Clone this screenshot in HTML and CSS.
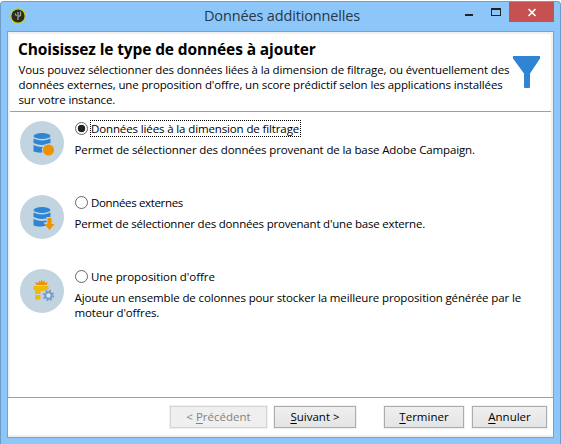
FILE: index.html
```html
<!DOCTYPE html>
<html lang="fr">
<head>
<meta charset="utf-8">
<title>Données additionnelles</title>
<link rel="stylesheet" href="styles.css">
</head>
<body>
<div class="window">
  <header class="titlebar">
    <svg class="app-icon" width="16" height="16" viewBox="0 0 16 16"><circle cx="8" cy="8" r="7.200" fill="#2b2d25" stroke="#c5d610" stroke-width="1.200"/><path d="M5 5.500l1.500 2.500M8 4v8M8 8.500l2.500-1V3.500" fill="none" stroke="#a9a998" stroke-width="1.200"/></svg>
    <h1 class="window-title">Données additionnelles</h1>
    <div class="controls">
      <svg class="ctl" width="26" height="20" viewBox="0 0 26 20"><path d="M5 12h8v2H5z" fill="#222"/></svg>
      <svg class="ctl" width="26" height="20" viewBox="0 0 26 20"><path d="M5 6h10v8H5zM6 8v5h8V8z" fill="#222" fill-rule="evenodd"/></svg>
      <svg class="ctl close" width="45" height="20" viewBox="0 0 45 20"><path d="M19.500 7l7 7M26.500 7l-7 7" stroke="#fff" stroke-width="1.700"/></svg>
    </div>
  </header>
  <main class="client">
    <div class="page">
      <section class="intro">
        <div class="intro-text">
          <h2>Choisissez le type de données à ajouter</h2>
          <p><span class="t1">Vous pouvez sélectionner des données liées à la dimension de filtrage, ou éventuellement des</span><br><span class="t1">données externes, une proposition d'offre, un score prédictif selon les applications installées</span><br><span class="t1">sur votre instance.</span></p>
        </div>
        <svg class="funnel" width="28" height="33" viewBox="0 0 28 33"><path d="M0 0h27v2.500L17 17.500V31q0 1-1 1h-4q-1 0-1-1V17.500L0 2.500z" fill="#3085d3"/></svg>
      </section>
      <section class="options">
        <div class="option">
          <svg class="badge" width="44" height="44" viewBox="0 0 44 44"><circle cx="22" cy="22" r="22" fill="#c3d4e1"/><g fill="#3085d3"><ellipse cx="22" cy="15" rx="8.500" ry="3"/><path d="M13.500 17.500q8.500 4 17 0v4.500q-8.500 4-17 0zM13.500 24q8.500 4 17 0v4.500q-8.500 5-17 2z"/></g><circle cx="28.500" cy="29" r="6.500" fill="#c3d4e1"/><circle cx="28.500" cy="29" r="5.500" fill="#ee9200"/></svg>
          <div class="body">
            <label class="choice"><span class="radio on"></span><span class="label focus t1">Données liées à la dimension de filtrage</span></label>
            <p class="t1">Permet de sélectionner des données provenant de la base Adobe Campaign.</p>
          </div>
        </div>
        <div class="option">
          <svg class="badge" width="44" height="44" viewBox="0 0 44 44"><circle cx="22" cy="22" r="22" fill="#c3d4e1"/><g fill="#3085d3"><ellipse cx="22" cy="15" rx="8.500" ry="3"/><path d="M13.500 17.500q8.500 4 17 0v4.500q-8.500 4-17 0zM13.500 24q8.500 4 17 0v4.500q-8.500 5-17 2z"/></g><path d="M26.500 22h6v5.500h3L29.500 36l-6-8.500h3z" fill="#c3d4e1"/><path d="M27.500 23h4v6h3l-5 6-5-6h3z" fill="#ee9200"/></svg>
          <div class="body">
            <label class="choice"><span class="radio"></span><span class="label t3">Données externes</span></label>
            <p class="t2">Permet de sélectionner des données provenant d'une base externe.</p>
          </div>
        </div>
        <div class="option">
          <svg class="badge" width="44" height="44" viewBox="0 0 44 44"><circle cx="22" cy="22" r="22" fill="#c3d4e1"/><path d="M16.500 16l-1.500-3 3.500 1 .5-2.500 1.500 1.500L21.500 10.500 23 13l1.500-1.500.5 2.500 3-1-1.500 3z" fill="#ee9200"/><path d="M13.500 17h15v4l-7 1h-6.500v-1h-1.500zM15 22h5.500v3H15zM15 26h5.500v4.500H15z" fill="#f0b90a"/><circle cx="28.500" cy="26.500" r="6" fill="#c3d4e1"/><circle cx="28.500" cy="26.500" r="3.200" fill="#d9e4ec" stroke="#7398cb" stroke-width="2"/><circle cx="28.500" cy="26.500" r="4.900" fill="none" stroke="#7398cb" stroke-width="1.600" stroke-dasharray="1.925 1.924"/></svg>
          <div class="body">
            <label class="choice"><span class="radio"></span><span class="label t4">Une proposition d'offre</span></label>
            <p class="t1">Ajoute un ensemble de colonnes pour stocker la meilleure proposition générée par le<br>moteur d'offres.</p>
          </div>
        </div>
      </section>
    </div>
    <footer class="actions">
      <button class="btn prev" disabled>&lt; <u>P</u>récédent</button>
      <button class="btn next"><u>S</u>uivant &gt;</button>
      <button class="btn finish"><u>T</u>erminer</button>
      <button class="btn cancel"><u>A</u>nnuler</button>
    </footer>
  </main>
</div>
</body>
</html>
```
FILE: styles.css
```css
* { box-sizing: border-box; }

body {
  margin: 0;
  background: #fff;
  color: #000;
  font: 11.5px/15px "Open Sans", "Noto Sans", sans-serif;
  overflow: hidden;
}

h1, h2, p { margin: 0; white-space: nowrap; }

.window {
  width: 561px;
  height: 443px;
  margin-top: 1px;
  padding: 0 6px;
  background: #8dc7fa;
  border: solid #6c9dc8;
  border-width: 1px 1px 0;
  border-radius: 4px 4px 0 0;
}

.titlebar {
  display: flex;
  height: 29px;
  padding-left: 3px;
}

.app-icon { flex: none; margin-top: 6px; }

.window-title {
  flex: none;
  margin-left: 178px;
  font-size: 14.5px;
  line-height: 28px;
  font-weight: 400;
  letter-spacing: -0.15px;
  color: #26384a;
}

.controls { display: flex; margin-left: auto; height: 20px; }
.ctl { display: block; }
.close { margin-left: -3px; background: #c75050; }

.client {
  display: flex;
  flex-direction: column;
  width: 547px;
  height: 407px;
  background: #fff;
  border: 1px solid #6fa4d3;
}

.page {
  height: 365px;
  padding-top: 5px;
  border: solid #f0f0f0;
  border-width: 2px 2px 0;
}

.intro {
  display: flex;
  height: 73px;
  padding-left: 8px;
  border-bottom: 1px solid #a0a0a0;
}

.intro-text { width: 495px; }

.intro h2 {
  font-size: 15.5px;
  line-height: 20px;
  letter-spacing: -0.12px;
  margin-bottom: 3px;
}

.intro p { padding-left: 0.5px; }

.funnel { flex: none; margin-top: 17px; }

.options { padding: 8px 0 0 10px; }

.option {
  display: flex;
  gap: 10px;
  height: 74px;
}

.option p { padding-left: 0.5px; }

.badge { flex: none; margin-top: 1px; }

.choice {
  display: flex;
  align-items: center;
  height: 17px;
  margin-bottom: 5px;
}

.radio {
  width: 13px;
  height: 13px;
  margin: 0 2px 0 1px;
  border: 1px solid #666;
  border-radius: 50%;
}

.radio.on { background: radial-gradient(circle, #222 3.500px, #fff 4.100px); }

.label {
  height: 17px;
  padding: 0 1px 0 0;
  line-height: 15px;
  border: 1px solid transparent;
}

.label.focus { width: 211px; border: 1px dotted #000; white-space: nowrap; }

.t1 { letter-spacing: -0.125px; }
.t2 { letter-spacing: -0.2px; }
.t3 { letter-spacing: -0.35px; }
.t4 { letter-spacing: -0.06px; }

.actions {
  display: flex;
  height: 40px;
  padding: 8px 6px 0 162px;
  border-top: 1px solid #a0a0a0;
  border-bottom: 2px solid #f0f0f0;
}

.btn {
  height: 22px;
  padding: 0;
  border: 1px solid #acacac;
  background: linear-gradient(#efefef, #e4e4e4);
  box-shadow: 0 0 0 1px #f0f0f0;
  color: #000;
  font: inherit;
  line-height: 20px;
}

.btn u { text-underline-offset: 2px; }
.prev { width: 97px; color: #838383; background: #efefef; border-color: #d4d4d4; }
.next { width: 82px; margin-left: 7px; }
.finish { width: 80px; margin-left: auto; }
.cancel { width: 75px; margin-left: 8px; }
```
